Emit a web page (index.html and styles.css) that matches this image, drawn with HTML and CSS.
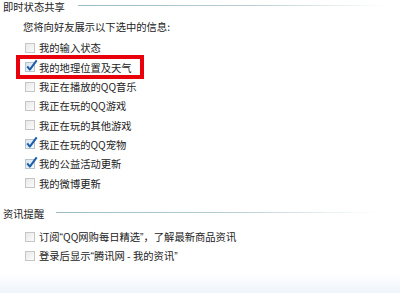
FILE: index.html
```html
<!DOCTYPE html>
<html lang="zh-CN">
<head>
<meta charset="utf-8">
<link rel="stylesheet" href="styles.css">
</head>
<body>
<div class="page">
  <div class="sec-head"><span>即时状态共享</span><i class="rule"></i></div>
  <div class="sub">您将向好友展示以下选中的信息:</div>
  <div class="list">
    <div class="row"><span class="box"></span><span>我的输入状态</span></div>
    <div class="row mark"><span class="box on"><svg viewBox="0 0 14 14"><path d="M2.4 8 L5.2 11.4 L12.6 1.6" fill="none" stroke="#1d5ea8" stroke-width="2.2" stroke-linejoin="round"/></svg></span><span>我的地理位置及天气</span><div class="hl"></div></div>
    <div class="row"><span class="box"></span><span>我正在播放的QQ音乐</span></div>
    <div class="row"><span class="box"></span><span>我正在玩的QQ游戏</span></div>
    <div class="row"><span class="box"></span><span>我正在玩的其他游戏</span></div>
    <div class="row"><span class="box on"><svg viewBox="0 0 14 14"><path d="M2.4 8 L5.2 11.4 L12.6 1.6" fill="none" stroke="#1d5ea8" stroke-width="2.2" stroke-linejoin="round"/></svg></span><span>我正在玩的QQ宠物</span></div>
    <div class="row"><span class="box on"><svg viewBox="0 0 14 14"><path d="M2.4 8 L5.2 11.4 L12.6 1.6" fill="none" stroke="#1d5ea8" stroke-width="2.2" stroke-linejoin="round"/></svg></span><span>我的公益活动更新</span></div>
    <div class="row"><span class="box"></span><span>我的微博更新</span></div>
  </div>
  <div class="sec-head sec2"><span>资讯提醒</span><i class="rule"></i></div>
  <div class="list list2">
    <div class="row"><span class="box"></span><span>订阅<span class="q">“</span>QQ网购每日精选<span class="q">”</span>，了解最新商品资讯</span></div>
    <div class="row"><span class="box"></span><span>登录后显示<span class="q">“</span>腾讯网 - 我的资讯<span class="q">”</span></span></div>
  </div>
</div>
</body>
</html>
```
FILE: styles.css
```css
html, body {
  margin: 0;
  padding: 0;
}
body {
  width: 400px;
  height: 293px;
  overflow: hidden;
  background: linear-gradient(to bottom, #ffffff 0, #ffffff 274px, #eef5fb 293px);
  font-family: "Noto Sans CJK SC", "Noto Sans", sans-serif;
  font-size: 10.3px;
  color: #222;
}
.page {
  display: flex;
  flex-direction: column;
}
.sec-head {
  display: flex;
  align-items: center;
  height: 14px;
  line-height: 14px;
  padding-left: 3px;
  width: 385px;
}
.sec-head span {
  white-space: nowrap;
}
.rule {
  flex: 1;
  height: 1px;
  margin-left: 13px;
  margin-bottom: 4px;
  background: linear-gradient(to right, #9dbcc6 0%, #b9cdd3 55%, rgba(220,228,230,0.6) 85%, rgba(255,255,255,0) 100%);
}
.sub {
  margin-top: 6px;
  margin-left: 23px;
  line-height: 14px;
  height: 14px;
}
.list {
  margin-top: 4.3px;
  display: flex;
  flex-direction: column;
}
.row {
  position: relative;
  height: 19.3px;
  display: flex;
  align-items: center;
  padding-left: 25px;
  white-space: nowrap;
}
.q {
  font-family: "Liberation Sans", sans-serif;
}
.box {
  position: relative;
  width: 8px;
  height: 8px;
  border: 1px solid #c6c6c6;
  background: linear-gradient(135deg, #e9e9e9, #fbfbfb);
  margin-right: 4px;
  flex: none;
}
.box.on {
  background: linear-gradient(135deg, #d7e6f2, #f4f8fb);
  border-color: #b8c3cc;
}
.box svg {
  position: absolute;
  left: -1px;
  top: -4px;
  width: 13px;
  height: 13px;
}
.hl {
  position: absolute;
  left: 16px;
  top: -3px;
  width: 120px;
  height: 16px;
  border: 4px solid #e8000b;
}
.sec2 {
  margin-top: 14.3px;
  width: 374px;
}
.sec2 .rule {
  margin-left: 12px;
  margin-bottom: 2px;
}
.list2 {
  margin-top: 6.3px;
}
.list2 .row {
  height: 19px;
}
```
